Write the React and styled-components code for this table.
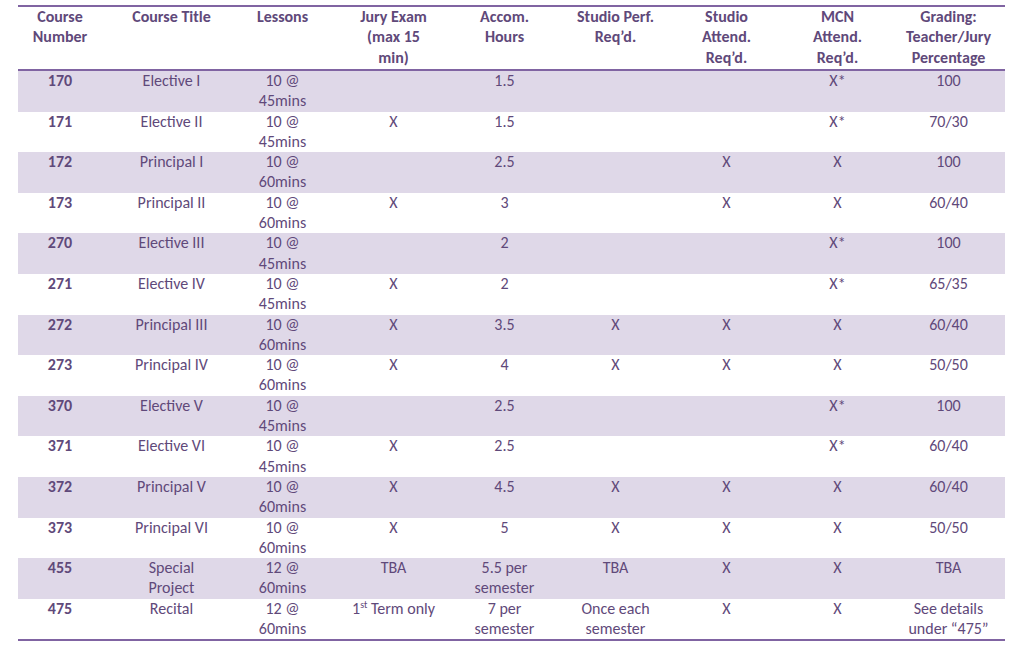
import styled, { createGlobalStyle } from "styled-components";

const Global = createGlobalStyle`
  html, body {
    margin: 0;
    padding: 0;
    background: #fff;
  }
  body {
    font-family: Carlito, Lato, "Liberation Sans", sans-serif;
  }
`;

const Page = styled.div`
  padding: 5px 0 0 18px;
`;

const Table = styled.div`
  width: 987px;
  border-top: 2px solid #8064a2;
  border-bottom: 2px solid #8064a2;
`;

const Row = styled.div`
  display: grid;
  grid-template-columns: 98px repeat(8, 111px);
  height: ${(p) => (p.$head ? "62px" : "40.6px")};
  background: ${(p) => (p.$shaded ? "#dfd8e8" : "#fff")};
  border-bottom: ${(p) => (p.$head ? "2px solid #8064a2" : "none")};
`;

const Cell = styled.div`
  text-align: center;
  font-size: 16px;
  line-height: 20.3px;
  color: #5f497a;
  font-weight: ${(p) => (p.$bold ? 700 : 400)};
  padding-right: ${(p) => (p.$first ? "14px" : "0")};
  white-space: nowrap;

  sup {
    font-size: 10px;
    line-height: 0;
  }
`;

const headers = [
  ["Course", "Number"],
  ["Course Title"],
  ["Lessons"],
  ["Jury Exam", "(max 15", "min)"],
  ["Accom.", "Hours"],
  ["Studio Perf.", "Req’d."],
  ["Studio", "Attend.", "Req’d."],
  ["MCN", "Attend.", "Req’d."],
  ["Grading:", "Teacher/Jury", "Percentage"],
];

const rows = [
  ["170", ["Elective I"], ["10 @", "45mins"], "", "1.5", "", "", "X*", "100"],
  ["171", ["Elective II"], ["10 @", "45mins"], "X", "1.5", "", "", "X*", "70/30"],
  ["172", ["Principal I"], ["10 @", "60mins"], "", "2.5", "", "X", "X", "100"],
  ["173", ["Principal II"], ["10 @", "60mins"], "X", "3", "", "X", "X", "60/40"],
  ["270", ["Elective III"], ["10 @", "45mins"], "", "2", "", "", "X*", "100"],
  ["271", ["Elective IV"], ["10 @", "45mins"], "X", "2", "", "", "X*", "65/35"],
  ["272", ["Principal III"], ["10 @", "60mins"], "X", "3.5", "X", "X", "X", "60/40"],
  ["273", ["Principal IV"], ["10 @", "60mins"], "X", "4", "X", "X", "X", "50/50"],
  ["370", ["Elective V"], ["10 @", "45mins"], "", "2.5", "", "", "X*", "100"],
  ["371", ["Elective VI"], ["10 @", "45mins"], "X", "2.5", "", "", "X*", "60/40"],
  ["372", ["Principal V"], ["10 @", "60mins"], "X", "4.5", "X", "X", "X", "60/40"],
  ["373", ["Principal VI"], ["10 @", "60mins"], "X", "5", "X", "X", "X", "50/50"],
  ["455", ["Special", "Project"], ["12 @", "60mins"], "TBA", ["5.5 per", "semester"], "TBA", "X", "X", "TBA"],
  [
    "475",
    ["Recital"],
    ["12 @", "60mins"],
    <>1<sup>st</sup> Term only</>,
    ["7 per", "semester"],
    ["Once each", "semester"],
    "X",
    "X",
    ["See details", "under “475”"],
  ],
];

const Lines = ({ value }) =>
  Array.isArray(value)
    ? value.map((line, i) => <div key={i}>{line}</div>)
    : value;

export default function App() {
  return (
    <Page>
      <Global />
      <Table>
        <Row $head>
          {headers.map((h, i) => (
            <Cell key={i} $bold $first={i === 0}>
              <Lines value={h} />
            </Cell>
          ))}
        </Row>
        {rows.map((r, ri) => (
          <Row key={ri} $shaded={ri % 2 === 0}>
            {r.map((v, ci) => (
              <Cell key={ci} $bold={ci === 0} $first={ci === 0}>
                <Lines value={v} />
              </Cell>
            ))}
          </Row>
        ))}
      </Table>
    </Page>
  );
}
